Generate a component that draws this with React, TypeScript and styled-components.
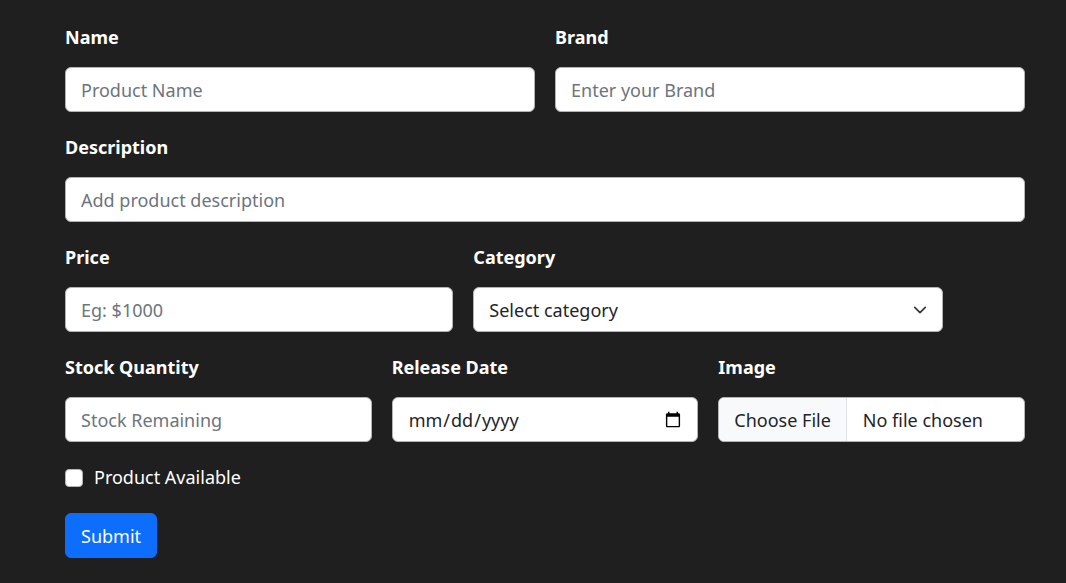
import React from 'react';
import styled, { createGlobalStyle } from 'styled-components';

const GlobalStyle = createGlobalStyle`
  html, body {
    margin: 0;
    padding: 0;
    background: #1f1f1f;
  }
  body {
    font-family: "Noto Sans", "Open Sans", sans-serif;
    font-size: 18px;
    color: #ffffff;
  }
  * {
    box-sizing: border-box;
  }
`;

const Page = styled.div`
  padding: 24px 0 0 65px;
  min-height: 583px;
`;

const Form = styled.form`
  width: 960px;
  display: grid;
  grid-template-columns: repeat(12, 1fr);
  column-gap: 20px;
  row-gap: 22px;
`;

const Field = styled.div<{ $span: number }>`
  grid-column: span ${(p) => p.$span};
  display: flex;
  flex-direction: column;
`;

const Label = styled.label`
  font-weight: 700;
  font-size: 18px;
  line-height: 27px;
  margin-bottom: 16px;
`;

const inputBase = `
  width: 100%;
  height: 45px;
  padding: 0 15px;
  font-family: inherit;
  font-size: 18px;
  color: #212529;
  background: #ffffff;
  border: 1px solid #b4b4b4;
  border-radius: 6px;
  outline: none;
`;

const Input = styled.input`
  ${inputBase}
  &::placeholder {
    color: #6c757d;
  }
  &::-webkit-calendar-picker-indicator {
    width: 18px;
    height: 18px;
    margin-right: -2px;
  }
`;

const SelectWrap = styled.div`
  position: relative;
`;

const Select = styled.select`
  ${inputBase}
  appearance: none;
  -webkit-appearance: none;
`;

const Chevron = styled.svg`
  position: absolute;
  right: 16px;
  top: 50%;
  width: 14px;
  height: 14px;
  transform: translateY(-50%);
  pointer-events: none;
`;

const FileInput = styled.input`
  ${inputBase}
  padding: 0;
  overflow: hidden;
  line-height: 43px;
  &::file-selector-button {
    height: 43px;
    padding: 0 15px;
    margin: 0 16px 0 0;
    font-family: inherit;
    font-size: 18px;
    color: #212529;
    background: #f8f9fa;
    border: none;
    border-right: 1px solid #dee2e6;
    border-radius: 0;
  }
`;

const CheckRow = styled.label`
  grid-column: span 12;
  display: flex;
  align-items: center;
  gap: 11px;
  line-height: 27px;
  font-size: 18px;
`;

const Checkbox = styled.input`
  appearance: none;
  -webkit-appearance: none;
  margin: 0;
  width: 18px;
  height: 18px;
  background: #ffffff;
  border: 1px solid #b4b4b4;
  border-radius: 4px;
`;

const ButtonRow = styled.div`
  grid-column: span 12;
`;

const SubmitButton = styled.button`
  height: 45px;
  padding: 0 15px;
  font-family: inherit;
  font-size: 18px;
  color: #ffffff;
  background: #0d6efd;
  border: 1px solid #0d6efd;
  border-radius: 6px;
  cursor: pointer;
`;

const App = () => {
  return (
    <Page>
      <GlobalStyle />
      <Form onSubmit={(e) => e.preventDefault()}>
        <Field $span={6}>
          <Label>Name</Label>
          <Input type="text" placeholder="Product Name" />
        </Field>
        <Field $span={6}>
          <Label>Brand</Label>
          <Input type="text" placeholder="Enter your Brand" />
        </Field>
        <Field $span={12}>
          <Label>Description</Label>
          <Input type="text" placeholder="Add product description" />
        </Field>
        <Field $span={5}>
          <Label>Price</Label>
          <Input type="number" placeholder="Eg: $1000" />
        </Field>
        <Field $span={6}>
          <Label>Category</Label>
          <SelectWrap>
            <Select defaultValue="">
              <option value="" disabled>
                Select category
              </option>
              <option value="Laptop">Laptop</option>
              <option value="Headphone">Headphone</option>
              <option value="Mobile">Mobile</option>
              <option value="Electronics">Electronics</option>
            </Select>
            <Chevron viewBox="0 0 16 16">
              <path
                d="M2 5l6 6 6-6"
                fill="none"
                stroke="#343a40"
                strokeWidth="2"
                strokeLinecap="round"
                strokeLinejoin="round"
              />
            </Chevron>
          </SelectWrap>
        </Field>
        <Field $span={4}>
          <Label>Stock Quantity</Label>
          <Input type="number" placeholder="Stock Remaining" />
        </Field>
        <Field $span={4}>
          <Label>Release Date</Label>
          <Input type="date" />
        </Field>
        <Field $span={4}>
          <Label>Image</Label>
          <FileInput type="file" />
        </Field>
        <CheckRow>
          <Checkbox type="checkbox" />
          Product Available
        </CheckRow>
        <ButtonRow>
          <SubmitButton type="submit">Submit</SubmitButton>
        </ButtonRow>
      </Form>
    </Page>
  );
};

export default App;
